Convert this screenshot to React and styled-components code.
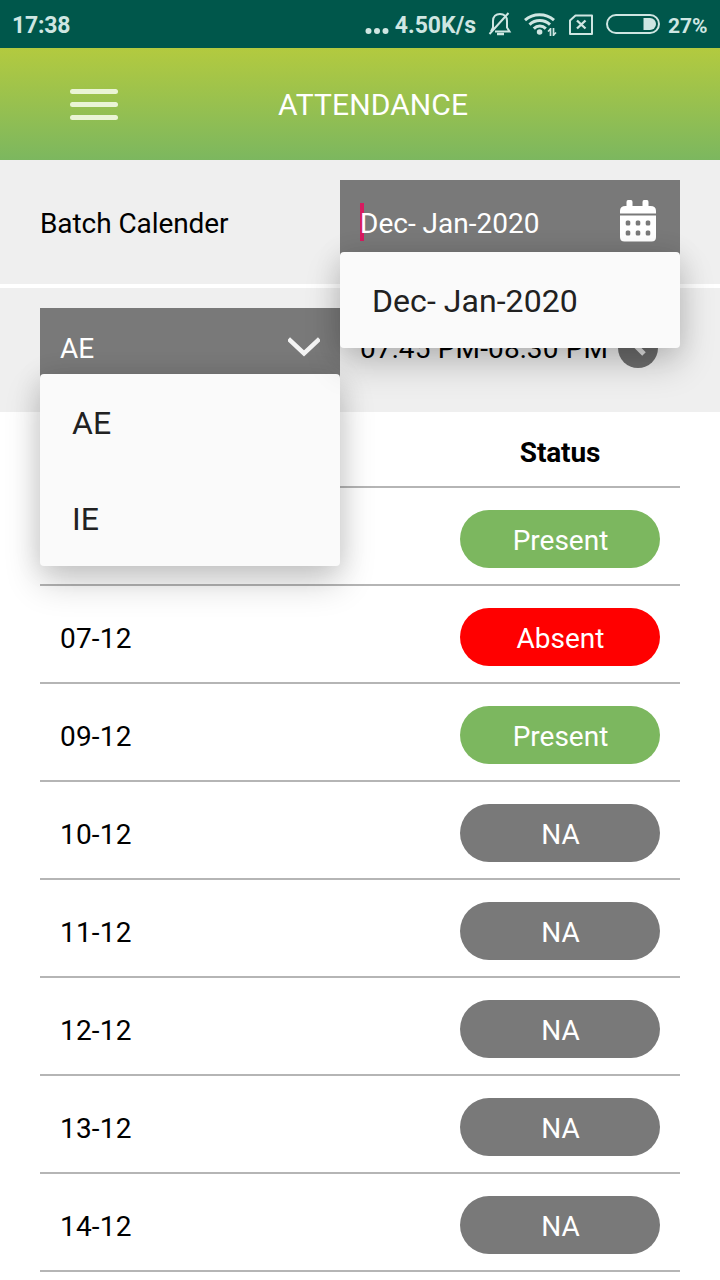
import React from "react";
import styled, { createGlobalStyle } from "styled-components";

const GlobalStyle = createGlobalStyle`
  * {
    box-sizing: border-box;
  }
  body {
    margin: 0;
    background: #fff;
    color: #000;
    font-family: Roboto, "Liberation Sans", sans-serif;
    font-size: 28px;
    line-height: 32px;
  }
`;

const Screen = styled.div`
  width: 720px;
  height: 1280px;
  overflow: hidden;
`;

const StatusBar = styled.div`
  display: flex;
  align-items: center;
  height: 48px;
  padding: 4px 12px 0 12px;
  background: #00574b;
  color: #cfe6e2;
  font-weight: 700;
  white-space: nowrap;
`;

const StatusIcon = styled.div`
  flex: none;
  height: 48px;
  margin-top: -4px;
  margin-left: ${props => props.$left || 0}px;

  svg {
    display: block;
  }
`;

const Clock = styled.span`
  margin-right: auto;
  font-size: 23px;
  letter-spacing: -0.2px;
`;

const Speed = styled.span`
  margin: 0 12px 0 6px;
  font-size: 23px;
`;

const Percent = styled.span`
  width: 40px;
  margin-left: 8px;
  font-size: 21px;
`;

const Header = styled.header`
  display: flex;
  align-items: center;
  height: 112px;
  padding-left: 70px;
  background: linear-gradient(#b3ca3f, #7cb75f);
`;

const MenuButton = styled.button`
  display: flex;
  flex-direction: column;
  gap: 8px;
  width: 48px;
  margin-top: 1px;
  padding: 0;
  border: 0;
  background: none;

  span {
    height: 5px;
    border-radius: 3px;
    background: #eaf4d5;
  }
`;

const Title = styled.h1`
  margin: 2px 0 0 160px;
  color: #fff;
  font-size: 30px;
  font-weight: 400;
  letter-spacing: 0.1px;
`;

const Panel = styled.section`
  display: flex;
  height: 124px;
  padding: 20px 40px;
  background: #efefef;

  & + & {
    margin-top: 4px;
  }
`;

const Label = styled.div`
  width: 300px;
  padding-top: 28px;
  letter-spacing: -0.08px;
`;

const Select = styled.div`
  position: relative;
  z-index: ${props => props.$layer};
  display: flex;
  justify-content: space-between;
  width: ${props => props.$width}px;
  height: 84px;
  padding: ${props => props.$top}px 20px 0;
  background: #797979;
  color: #fff;
`;

const Caret = styled.i`
  position: absolute;
  left: 20px;
  top: 23px;
  width: 4px;
  height: 38px;
  background: #d81b60;
`;

const Value = styled.span`
  position: relative;
`;

const FieldIcon = styled.div`
  flex: none;
  height: 44px;
  margin-top: ${props => props.$top}px;
  margin-right: ${props => props.$right || 0}px;

  svg {
    display: block;
  }
`;

const Options = styled.ul`
  position: absolute;
  left: 0;
  top: ${props => props.$top}px;
  width: 100%;
  margin: 0;
  padding: 0;
  list-style: none;
  border-radius: 4px;
  background: #fafafa;
  color: #212121;
  font-size: 32px;
  box-shadow: 0 16px 36px rgba(0, 0, 0, 0.2), 0 2px 28px rgba(0, 0, 0, 0.1);
`;

const Option = styled.li`
  display: flex;
  align-items: center;
  height: 96px;
  padding: 2px 32px 0;
  letter-spacing: 0.06px;
`;

const Time = styled.div`
  display: flex;
  justify-content: space-between;
  width: 340px;
  padding: 20px 22px 0 20px;
  white-space: nowrap;

  span {
    padding-top: 5px;
    letter-spacing: 0.17px;
  }
`;

const Table = styled.div`
  margin: 0 40px;
`;

const TableHead = styled.div`
  display: flex;
  justify-content: flex-end;
  height: 76px;
  padding: 25px 20px 0;
  border-bottom: 2px solid #b5b5b5;
  font-weight: 700;
  letter-spacing: -0.15px;

  span {
    width: 200px;
    text-align: center;
  }
`;

const Row = styled.div`
  display: flex;
  justify-content: space-between;
  height: 98px;
  padding: 22px 20px 0;
  border-bottom: 2px solid #b5b5b5;
`;

const DateCell = styled.span`
  padding-top: 15px;
  letter-spacing: 0.2px;
`;

const colors = {
  Present: "#7cb75f",
  Absent: "#ff0000",
  NA: "#797979"
};

const Badge = styled.span`
  width: 200px;
  height: 58px;
  padding: 15px 0 0 1px;
  border-radius: 29px;
  background: ${props => colors[props.$status]};
  color: #fff;
  text-align: center;
`;

const DotsIcon = () => (
  <svg width="24" height="48" fill="#cfe6e2">
    <circle cx="3.5" cy="31" r="3" />
    <circle cx="12" cy="31" r="3" />
    <circle cx="20.5" cy="31" r="3" />
  </svg>
);

const BellIcon = () => (
  <svg width="24" height="48" fill="none" stroke="#cfe6e2" strokeWidth="2">
    <path d="M5 28v-7c0-4.500 3-7 7-7s7 2.500 7 7v6.500l2.500 4H7" />
    <path d="M5 27.500l-2 4M1.500 34L20.500 13" />
    <path d="M9 34h7" strokeWidth="2.500" />
  </svg>
);

const WifiIcon = () => (
  <svg width="34" height="48" fill="none" stroke="#cfe6e2" strokeWidth="3">
    <path d="M1 20.200a22 22 0 0 1 29 0" />
    <path d="M5.500 24.600a15 15 0 0 1 20.500 0" />
    <path d="M9.800 28.600a8.500 8.500 0 0 1 12 0" />
    <circle cx="15.600" cy="32" r="2.800" fill="#cfe6e2" stroke="none" />
    <path d="M26.500 28v8M24 31.500l2.500-2.500M29.500 28v8M29.500 35l2.500-2.500" strokeWidth="1.700" />
  </svg>
);

const SimIcon = () => (
  <svg width="26" height="48" fill="none" stroke="#cfe6e2" strokeWidth="2">
    <path d="M7.500 15.500H24V34H2V20.500z" strokeLinejoin="round" />
    <path d="M9 20.500l8.500 8M17.500 20.500l-8.500 8" strokeWidth="2.400" />
  </svg>
);

const BatteryIcon = () => (
  <svg width="54" height="48">
    <rect x="1" y="15" width="52" height="18" rx="9" fill="none" stroke="#cfe6e2" strokeWidth="2" />
    <path d="M37.500 18h6.500a6 6 0 0 1 0 12h-6.500z" fill="#cfe6e2" />
  </svg>
);

const CalendarIcon = () => (
  <svg width="40" height="44" viewBox="0 0 40 44">
    <path d="M10 0h3q1.500 0 1.500 2v4h10V2q0-2 1.500-2h3q1.500 0 1.500 2v4h2q5.500 0 5.500 5v2.500H2V11q0-5 5.500-5h1V2q0-2 1.500-2z" fill="#fff" />
    <path d="M2 15.500h36V37q0 4.500-4.500 4.500h-27Q2 41.500 2 37z" fill="#fff" />
    {[10, 20, 30].map(x =>
      [23, 33].map(y => (
        <rect key={`${x}-${y}`} x={x - 2.300} y={y - 2.500} width="4.600" height="5" rx="1.500" fill="#797979" />
      ))
    )}
  </svg>
);

const ChevronIcon = () => (
  <svg width="32" height="22" fill="none" stroke="#f4f4f4" strokeWidth="4.500">
    <path d="M0.500 2L16 16.500L31.500 2" />
  </svg>
);

const ClockIcon = () => (
  <svg width="40" height="40">
    <circle cx="20" cy="20" r="20" fill="#6e6e6e" />
    <path d="M19 7v12l7 7" fill="none" stroke="#e4e4e4" strokeWidth="5" />
  </svg>
);

// the first day has no date label, only a status
const days = [
  { status: "Present" },
  { date: "07-12", status: "Absent" },
  { date: "09-12", status: "Present" },
  { date: "10-12", status: "NA" },
  { date: "11-12", status: "NA" },
  { date: "12-12", status: "NA" },
  { date: "13-12", status: "NA" },
  { date: "14-12", status: "NA" }
];

const App = () => {
  return (
    <Screen>
      <GlobalStyle />
      <StatusBar>
        <Clock>17:38</Clock>
        <StatusIcon>
          <DotsIcon />
        </StatusIcon>
        <Speed>4.50K/s</Speed>
        <StatusIcon>
          <BellIcon />
        </StatusIcon>
        <StatusIcon $left={12}>
          <WifiIcon />
        </StatusIcon>
        <StatusIcon $left={10}>
          <SimIcon />
        </StatusIcon>
        <StatusIcon $left={12}>
          <BatteryIcon />
        </StatusIcon>
        <Percent>27%</Percent>
      </StatusBar>
      <Header>
        <MenuButton aria-label="Menu">
          <span />
          <span />
          <span />
        </MenuButton>
        <Title>ATTENDANCE</Title>
      </Header>
      <Panel>
        <Label>Batch Calender</Label>
        <Select $width={340} $top={28} $layer={3}>
          <Caret />
          <Value>Dec- Jan-2020</Value>
          <FieldIcon $top={-8} $right={2}>
            <CalendarIcon />
          </FieldIcon>
          <Options $top={72}>
            <Option>Dec- Jan-2020</Option>
          </Options>
        </Select>
      </Panel>
      <Panel>
        <Select $width={300} $top={25} $layer={2}>
          <Value>AE</Value>
          <FieldIcon $top={4}>
            <ChevronIcon />
          </FieldIcon>
          <Options $top={66}>
            <Option>AE</Option>
            <Option>IE</Option>
          </Options>
        </Select>
        <Time>
          <span>07:45 PM-08:30 PM</span>
          <ClockIcon />
        </Time>
      </Panel>
      <Table>
        <TableHead>
          <span>Status</span>
        </TableHead>
        {days.map((day, i) => (
          <Row key={i}>
            <DateCell>{day.date}</DateCell>
            <Badge $status={day.status}>{day.status}</Badge>
          </Row>
        ))}
      </Table>
    </Screen>
  );
};

export default App;
